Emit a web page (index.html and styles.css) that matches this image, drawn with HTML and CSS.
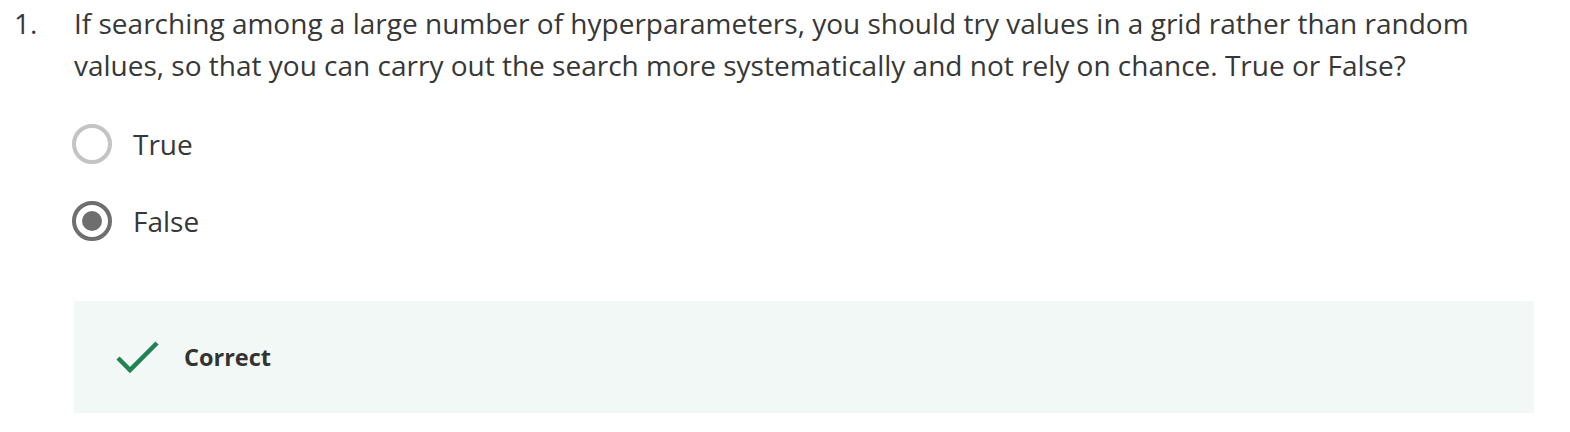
FILE: index.html
```html
<!DOCTYPE html>
<html>
<head>
<meta charset="utf-8">
<link rel="stylesheet" href="styles.css">
</head>
<body>
<div class="question">
  <div class="num">1.</div>
  <div class="content">
    <p class="prompt">If searching among a large number of hyperparameters, you should try values in a grid rather than random values, so that you can carry out the search more systematically and not rely on chance. True or False?</p>
    <div class="options">
      <label class="option"><span class="radio"></span><span class="label">True</span></label>
      <label class="option"><span class="radio checked"></span><span class="label">False</span></label>
    </div>
    <div class="feedback">
      <svg class="check" width="44" height="34" viewBox="0 0 44 34"><path d="M2 18 L14 30 L41 3" fill="none" stroke="#1f8354" stroke-width="4.5"/></svg>
      <span class="fb-text">Correct</span>
    </div>
  </div>
</div>
</body>
</html>
```
FILE: styles.css
```css
html, body { margin: 0; padding: 0; background: #fff; }
body {
  font-family: "Open Sans", "Noto Sans", sans-serif;
  color: #373737;
}
.question {
  display: flex;
  padding: 2px 36px 0 14px;
}
.num {
  width: 60px;
  flex: none;
  font-size: 28px;
  line-height: 42px;
}
.content { flex: 1; }
.prompt {
  margin: 0;
  font-size: 28px;
  line-height: 42px;
}
.options {
  display: flex;
  flex-direction: column;
  gap: 37px;
  margin: 38px 0 0 -2px;
}
.option {
  display: flex;
  align-items: center;
  gap: 21px;
  height: 40px;
}
.radio {
  width: 40px;
  height: 40px;
  box-sizing: border-box;
  border: 4px solid #c4c4c4;
  border-radius: 50%;
  display: flex;
  align-items: center;
  justify-content: center;
}
.radio.checked { border-color: #6e6e6e; }
.radio.checked::after {
  content: "";
  width: 20px;
  height: 20px;
  border-radius: 50%;
  background: #6e6e6e;
}
.label {
  font-size: 28px;
  line-height: 40px;
}
.feedback {
  margin-top: 60px;
  height: 112px;
  background: #f2f8f6;
  display: flex;
  align-items: center;
  padding-left: 42px;
  gap: 24px;
}
.check { display: block; }
.fb-text {
  font-weight: 700;
  font-size: 23.5px;
  color: #333;
}
```
